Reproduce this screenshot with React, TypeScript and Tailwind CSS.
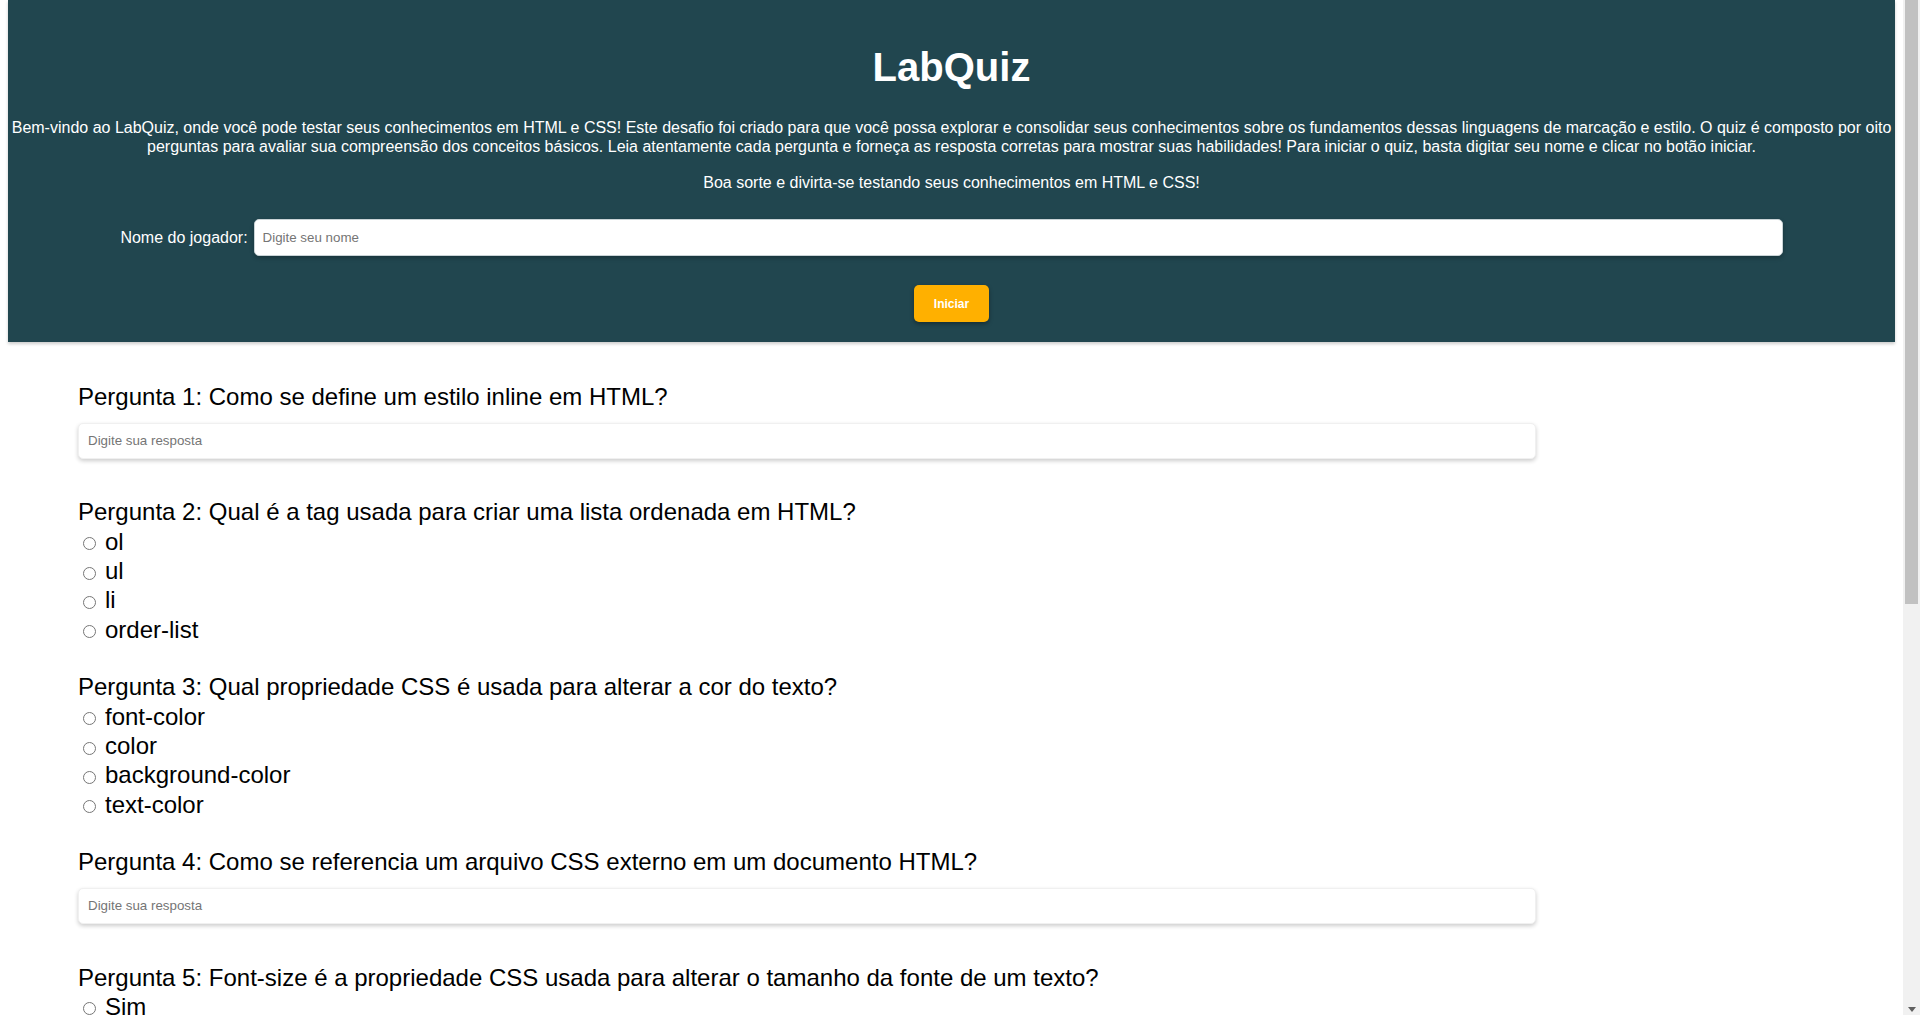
import React from 'react';

type Question =
  | { kind: 'text'; title: string }
  | { kind: 'radio'; title: string; options: string[] };

const questions: Question[] = [
  { kind: 'text', title: 'Como se define um estilo inline em HTML?' },
  {
    kind: 'radio',
    title: 'Qual é a tag usada para criar uma lista ordenada em HTML?',
    options: ['ol', 'ul', 'li', 'order-list'],
  },
  {
    kind: 'radio',
    title: 'Qual propriedade CSS é usada para alterar a cor do texto?',
    options: ['font-color', 'color', 'background-color', 'text-color'],
  },
  { kind: 'text', title: 'Como se referencia um arquivo CSS externo em um documento HTML?' },
  {
    kind: 'radio',
    title: 'Font-size é a propriedade CSS usada para alterar o tamanho da fonte de um texto?',
    options: ['Sim', 'Não'],
  },
  { kind: 'text', title: 'Qual tag HTML é usada para criar um link?' },
  {
    kind: 'radio',
    title: 'Qual propriedade CSS define o espaçamento interno de um elemento?',
    options: ['margin', 'padding', 'border', 'spacing'],
  },
  { kind: 'text', title: 'Qual seletor CSS é usado para selecionar um elemento pelo id?' },
];

const App: React.FC = () => {
  return (
    <div className="flex h-screen overflow-hidden bg-white font-['Liberation_Sans',Arial,sans-serif] text-black">
      <div className="min-w-0 flex-1 overflow-hidden px-2">
        <header className="bg-[#21464f] pt-[44px] pb-[20px] text-center text-white shadow-[0_2px_3px_rgba(0,0,0,0.2)]">
          <h1 className="text-[40px] leading-[46px] font-bold">LabQuiz</h1>
          <p className="mt-[28px] text-[16px] leading-[19.4px]">
            Bem-vindo ao LabQuiz, onde você pode testar seus conhecimentos em HTML e CSS! Este desafio foi criado
            para que você possa explorar e consolidar seus conhecimentos sobre os fundamentos dessas linguagens de
            marcação e estilo. O quiz é composto por oito perguntas para avaliar sua compreensão dos conceitos
            básicos. Leia atentamente cada pergunta e forneça as resposta corretas para mostrar suas habilidades!
            Para iniciar o quiz, basta digitar seu nome e clicar no botão iniciar.
          </p>
          <p className="mt-[16px] text-[16px] leading-[19.4px]">
            Boa sorte e divirta-se testando seus conhecimentos em HTML e CSS!
          </p>
          <div className="mt-[27px] flex items-center justify-center gap-[6px]">
            <label htmlFor="player" className="text-[16px]">
              Nome do jogador:
            </label>
            <input
              id="player"
              type="text"
              placeholder="Digite seu nome"
              className="h-[37px] w-[1529px] rounded-[5px] border border-[#c9d3d6] bg-white px-[8px] text-[13.33px] text-black placeholder:text-[#757575] shadow-[0_2px_4px_rgba(0,0,0,0.25)] outline-none"
            />
          </div>
          <div className="mt-[29px] flex justify-center">
            <button className="h-[37px] w-[75px] rounded-[5px] bg-[#ffb000] text-[12px] font-bold text-white shadow-[0_2px_4px_rgba(0,0,0,0.35)]">
              Iniciar
            </button>
          </div>
        </header>

        <main className="flex flex-col gap-[28px] pt-[40px] pb-[172px] pl-[70px]">
          {questions.map((q, i) => (
            <div key={i}>
              <div className="flex h-[29.4px] items-center text-[24px]">
                Pergunta {i + 1}: {q.title}
              </div>
              {q.kind === 'text' ? (
                <input
                  type="text"
                  placeholder="Digite sua resposta"
                  className="my-[11px] block h-[36px] w-[1458px] rounded-[5px] border border-[#f0f0f0] bg-white px-[9px] text-[13.33px] placeholder:text-[#757575] shadow-[0_2px_4px_rgba(0,0,0,0.2)] outline-none"
                />
              ) : (
                q.options.map((o) => (
                  <label key={o} className="flex h-[29.4px] items-center gap-[9px] text-[24px]">
                    <input type="radio" name={`q${i + 1}`} className="ml-[5px] mt-[4px] h-[13px] w-[13px]" />
                    {o}
                  </label>
                ))
              )}
            </div>
          ))}
          <div>
            <button className="h-[37px] w-[90px] rounded-[5px] bg-[#ffb000] text-[12px] font-bold text-white shadow-[0_2px_4px_rgba(0,0,0,0.35)]">
              Enviar
            </button>
          </div>
        </main>
      </div>

      {/* page scrollbar */}
      <div className="flex w-[17px] shrink-0 flex-col bg-[#f1f1f1]">
        <div className="mx-[2px] h-[604px] bg-[#c1c1c1]" />
        <div className="mt-auto flex justify-center pb-[3px]">
          <svg width="8" height="5" viewBox="0 0 8 5">
            <path d="M0 0H8L4 5Z" fill="#606060" />
          </svg>
        </div>
      </div>
    </div>
  );
};

export default App;
